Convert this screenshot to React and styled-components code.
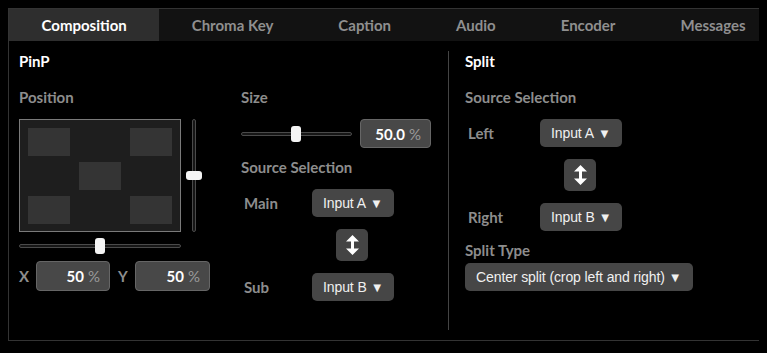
import styled, { createGlobalStyle } from "styled-components";

const GlobalStyle = createGlobalStyle`
  html, body {
    background: #000;
  }
  body {
    margin: 8px;
    overflow: hidden;
    font-family: Lato, "Noto Sans", sans-serif;
  }
`;

const Frame = styled.div`
  width: 780px;
  border: 1px solid #333;
  border-right: none;
`;

const TabBar = styled.div`
  display: flex;
  height: 32px;
  background: #121212;
  white-space: nowrap;
`;

const Tab = styled.div`
  display: flex;
  align-items: center;
  padding: 0 32.5px;
  font-size: 15px;
  font-weight: 700;
  color: ${(p) => (p.$active ? "#fff" : "#8f8f8f")};
  background: ${(p) => (p.$active ? "#2e2e2e" : "transparent")};
`;

const Content = styled.div`
  display: flex;
  height: 299px;
`;

const PinPSection = styled.section`
  width: 439px;
  box-sizing: border-box;
  padding: 10px;
`;

const Divider = styled.div`
  width: 1px;
  margin: 10px 0;
  background: #444;
`;

const SplitSection = styled.section`
  flex: 1;
  padding: 10px 16px;
`;

const Heading = styled.div`
  height: 20px;
  line-height: 20px;
  font-size: 15px;
  font-weight: 700;
  color: #fff;
`;

const Label = styled.div`
  margin-top: ${(p) => p.$top ?? 16}px;
  height: 20px;
  line-height: 20px;
  font-size: 15px;
  font-weight: 700;
  color: #8d8d8d;
`;

const Columns = styled.div`
  display: flex;
`;

const LeftCol = styled.div`
  width: 222px;
`;

const RightCol = styled.div`
  flex: 1;
`;

const PadRow = styled.div`
  display: flex;
  gap: 5px;
  margin-top: 12px;
  height: 113px;
`;

const Preview = styled.div`
  position: relative;
  width: 162px;
  height: 113px;
  box-sizing: border-box;
  border: 1px solid #7a7a7a;
  background: #1e1e1e;
`;

const Spot = styled.div`
  position: absolute;
  width: 42px;
  height: 28px;
  background: #343434;
`;

const VSlider = styled.div`
  position: relative;
  width: 16px;
  height: 113px;
`;

const VTrack = styled.div`
  position: absolute;
  left: 6px;
  top: 0;
  bottom: 0;
  width: 4px;
  box-sizing: border-box;
  border: 1px solid #4a4a4a;
  border-radius: 2px;
  background: #161616;
`;

const HSlider = styled.div`
  position: relative;
  width: ${(p) => p.$width}px;
  height: 16px;
  margin-top: ${(p) => p.$top ?? 0}px;
  flex-shrink: 0;
`;

const HTrack = styled.div`
  position: absolute;
  left: 0;
  right: 0;
  top: 6px;
  height: 4px;
  box-sizing: border-box;
  border: 1px solid #4a4a4a;
  border-radius: 2px;
  background: #161616;
`;

const Thumb = styled.div`
  position: absolute;
  width: ${(p) => (p.$vertical ? 16 : 10)}px;
  height: ${(p) => (p.$vertical ? 9 : 16)}px;
  border-radius: 3px;
  background: #f4f4f4;
`;

const XYRow = styled.div`
  display: flex;
  align-items: center;
  gap: 8px;
  margin-top: 7px;
`;

const Pair = styled.div`
  display: flex;
  align-items: center;
`;

const AxisLabel = styled.span`
  width: 17px;
  font-size: 15px;
  font-weight: 700;
  color: #8d8d8d;
`;

const NumberBox = styled.div`
  display: flex;
  align-items: center;
  justify-content: flex-end;
  width: ${(p) => p.$width}px;
  height: ${(p) => p.$height}px;
  box-sizing: border-box;
  padding-right: 9px;
  border: 1px solid #666;
  border-radius: 4px;
  background: #484848;
`;

const Value = styled.span`
  font-size: 15px;
  font-weight: 700;
  color: #fff;
`;

const Unit = styled.span`
  margin-left: 4px;
  font-size: 15px;
  color: #9a9a9a;
`;

const SizeRow = styled.div`
  display: flex;
  align-items: center;
  gap: 8px;
  margin-top: 12px;
`;

const SourceRow = styled.div`
  display: flex;
  align-items: center;
  margin-top: ${(p) => p.$top ?? 12}px;
`;

const RowLabel = styled.span`
  width: ${(p) => p.$width}px;
  padding-left: 3px;
  font-size: 15px;
  font-weight: 700;
  color: #8d8d8d;
`;

const SwapRow = styled.div`
  display: flex;
  justify-content: center;
  width: 80px;
  margin-top: 12px;
  padding-left: ${(p) => p.$indent}px;
`;

const SwapButton = styled.div`
  display: flex;
  align-items: center;
  justify-content: center;
  width: 32px;
  height: 32px;
  border-radius: 5px;
  background: #444;
`;

const Dropdown = styled.div`
  display: inline-flex;
  align-items: center;
  gap: 4px;
  height: 28px;
  padding: 0 11px;
  border-radius: 5px;
  background: #464646;
  font-family: "Liberation Sans", Arial, sans-serif;
  font-size: 14px;
  letter-spacing: -0.1px;
  color: #f0f0f0;
  white-space: nowrap;
`;

const Caret = styled.span`
  font-size: 13px;
`;

const spots = [
  [8, 8],
  [110, 8],
  [59, 42],
  [8, 76],
  [110, 76],
];

function Select({ children }) {
  return (
    <Dropdown>
      {children}
      <Caret>▼</Caret>
    </Dropdown>
  );
}

function Swap() {
  return (
    <SwapButton>
      <svg width="13" height="20" viewBox="0 0 13 20">
        <path
          d="M6.5 0 L13 6.5 H8 V13.5 H13 L6.5 20 L0 13.5 H5 V6.5 H0 Z"
          fill="#fff"
        />
      </svg>
    </SwapButton>
  );
}

function Percent({ value, width, height }) {
  return (
    <NumberBox $width={width} $height={height}>
      <Value>{value}</Value>
      <Unit>%</Unit>
    </NumberBox>
  );
}

const tabs = ["Composition", "Chroma Key", "Caption", "Audio", "Encoder", "Messages"];

export default function App() {
  return (
    <>
      <GlobalStyle />
      <Frame>
        <TabBar>
          {tabs.map((t, i) => (
            <Tab key={t} $active={i === 0}>
              {t}
            </Tab>
          ))}
        </TabBar>
        <Content>
          <PinPSection>
            <Heading>PinP</Heading>
            <Columns>
              <LeftCol>
                <Label>Position</Label>
                <PadRow>
                  <Preview>
                    {spots.map(([x, y]) => (
                      <Spot key={`${x}-${y}`} style={{ left: x, top: y }} />
                    ))}
                  </Preview>
                  <VSlider>
                    <VTrack />
                    <Thumb $vertical style={{ left: 0, top: 52 }} />
                  </VSlider>
                </PadRow>
                <HSlider $width={162} $top={6}>
                  <HTrack />
                  <Thumb style={{ left: 76, top: 0 }} />
                </HSlider>
                <XYRow>
                  <Pair>
                    <AxisLabel>X</AxisLabel>
                    <Percent value="50" width={74} height={30} />
                  </Pair>
                  <Pair>
                    <AxisLabel>Y</AxisLabel>
                    <Percent value="50" width={75} height={30} />
                  </Pair>
                </XYRow>
              </LeftCol>
              <RightCol>
                <Label>Size</Label>
                <SizeRow>
                  <HSlider $width={111}>
                    <HTrack />
                    <Thumb style={{ left: 50, top: 0 }} />
                  </HSlider>
                  <Percent value="50.0" width={71} height={29} />
                </SizeRow>
                <Label $top={9}>Source Selection</Label>
                <SourceRow>
                  <RowLabel $width={68}>Main</RowLabel>
                  <Select>Input A</Select>
                </SourceRow>
                <SwapRow $indent={71}>
                  <Swap />
                </SwapRow>
                <SourceRow>
                  <RowLabel $width={68}>Sub</RowLabel>
                  <Select>Input B</Select>
                </SourceRow>
              </RightCol>
            </Columns>
          </PinPSection>
          <Divider />
          <SplitSection>
            <Heading>Split</Heading>
            <Label>Source Selection</Label>
            <SourceRow>
              <RowLabel $width={72}>Left</RowLabel>
              <Select>Input A</Select>
            </SourceRow>
            <SwapRow $indent={75}>
              <Swap />
            </SwapRow>
            <SourceRow>
              <RowLabel $width={72}>Right</RowLabel>
              <Select>Input B</Select>
            </SourceRow>
            <Label $top={9}>Split Type</Label>
            <SourceRow $top={3}>
              <Select>Center split (crop left and right)</Select>
            </SourceRow>
          </SplitSection>
        </Content>
      </Frame>
    </>
  );
}
